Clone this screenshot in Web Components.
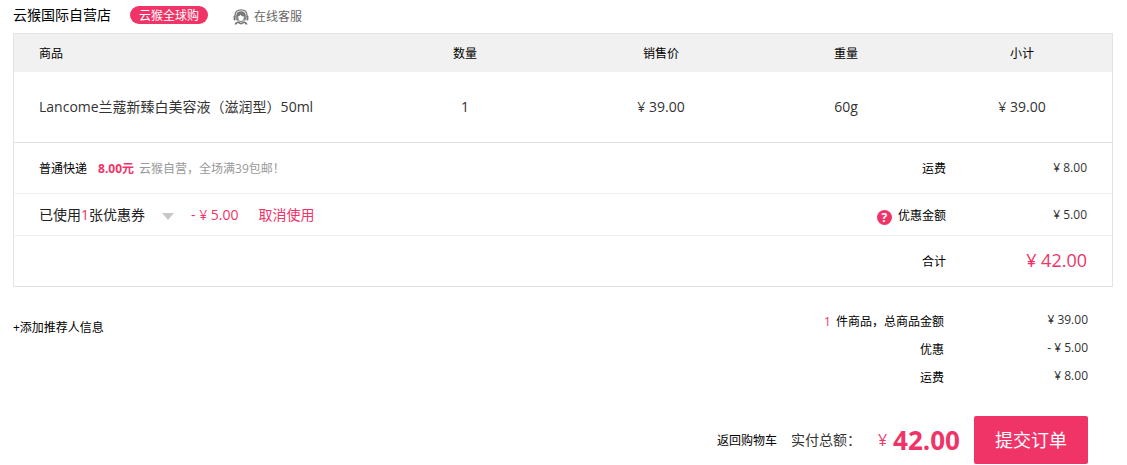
<!DOCTYPE html>
<html lang="zh-CN">
<head>
<meta charset="utf-8">
<title>确认订单</title>
<style>
  body {
    margin: 0;
    padding: 0 14px 0 13px;
    background: #fff;
    color: #000;
    font: 12px/20px "Open Sans", "Noto Sans CJK SC", sans-serif;
    --pink: #f03468;
    --line: #e3e3e3;
    --line-soft: #f1f1f1;
  }
</style>
</head>
<body>
<order-page></order-page>

<script>
const define = (name, html) => {
  const template = document.createElement('template');
  template.innerHTML = html;
  customElements.define(name, class extends HTMLElement {
    constructor() {
      super();
      this.attachShadow({ mode: 'open' }).append(template.content.cloneNode(true));
    }
  });
};

define('service-icon', `
  <style>
    :host { display: block; width: 16px; height: 16px; }
    svg { display: block; }
  </style>
  <svg width="16" height="16" viewBox="0 0 16 16" aria-hidden="true">
    <path d="M2 8V6.500C2 2.800 4.500 .8 8 .8s6 2 6 5.700V8" fill="none" stroke="#777" stroke-width="1.200"/>
    <path d="M3.200 11V6.500C3.200 3.800 5 2.200 8 2.200s4.800 1.600 4.800 4.300V11l-1.600 1V7.500C9.500 7.400 8.300 6.800 7.300 5.700 6.800 6.800 6 7.400 4.800 7.600V12z" fill="#777"/>
    <rect x=".6" y="6.500" width="2" height="5" rx="1" fill="#777"/>
    <rect x="13.400" y="6.500" width="2" height="5" rx="1" fill="#777"/>
    <path d="M4.800 8.500c0 2.600 1.300 4 3.200 4s3.200-1.400 3.200-4" fill="none" stroke="#777"/>
    <path d="M1.500 15.500c.3-2 1.800-2.800 4-3.200L8 14l2.500-1.700c2.200.4 3.700 1.200 4 3.200h-2l-1-1.500L8 15.500 4.500 14l-1 1.500z" fill="#777"/>
  </svg>`);

define('shop-bar', `
  <style>
    :host { display: flex; align-items: center; height: 30px; padding-bottom: 3px; }
    .name { font-size: 14px; }
    .tag { margin-left: 19px; padding: 1px 9px 0; border-radius: 9px; background: var(--pink); color: #fff; line-height: 17px; }
    a { display: flex; align-items: center; gap: 5px; margin-left: 25px; padding-top: 4px; color: #666; text-decoration: none; }
  </style>
  <span class="name"><slot name="name"></slot></span>
  <span class="tag"><slot name="tag"></slot></span>
  <a href="#service"><service-icon></service-icon><slot name="service"></slot></a>`);

define('goods-table', `
  <style>
    :host { display: block; }
    table { width: 100%; border-collapse: collapse; table-layout: fixed; }
    th, td { padding: 0; text-align: center; }
    th { height: 36px; padding-top: 2px; background: #f1f1f1; font-weight: normal; }
    td { height: 70px; color: #333; font-size: 14px; }
    th:first-child, td:first-child { padding-left: 25px; text-align: left; }
    .qty { width: 194px; }
    .price { width: 198px; }
    .weight { width: 172px; }
    .subtotal { width: 180px; }
  </style>
  <table>
    <thead>
      <tr>
        <th scope="col">商品</th>
        <th scope="col" class="qty">数量</th>
        <th scope="col" class="price">销售价</th>
        <th scope="col" class="weight">重量</th>
        <th scope="col" class="subtotal">小计</th>
      </tr>
    </thead>
    <tbody>
      <tr>
        <td>Lancome兰蔻新臻白美容液（滋润型）50ml</td>
        <td>1</td>
        <td>¥ 39.00</td>
        <td>60g</td>
        <td>¥ 39.00</td>
      </tr>
    </tbody>
  </table>`);

define('order-line', `
  <style>
    :host { display: flex; align-items: center; min-height: 50px; padding: 0 25px; border-top: 1px solid var(--line-soft); }
    .detail { display: flex; align-items: center; flex: 1; }
    .label { display: flex; align-items: center; padding-top: 2px; }
    .value { width: 141px; text-align: right; color: #333; }
  </style>
  <div class="detail"><slot></slot></div>
  <div class="label"><slot name="label"></slot></div>
  <div class="value"><slot name="value"></slot></div>`);

define('shipping-method', `
  <style>
    :host { display: block; padding-top: 2px; }
    b { margin-left: 11px; color: var(--pink); }
    .note { margin-left: 5px; color: #999; }
  </style>
  <span>普通快递</span><b>8.00元</b><span class="note">云猴自营，全场满39包邮！</span>`);

define('coupon-picker', `
  <style>
    :host { display: flex; align-items: center; font-size: 14px; color: #222; }
    em, .amount, a { font-style: normal; color: var(--pink); }
    button { margin: 2px 17px 0; padding: 0; border: 0; background: none; line-height: 0; }
    a { margin-left: 20px; text-decoration: none; }
  </style>
  <span>已使用<em>1</em>张优惠券</span>
  <button type="button" aria-label="选择优惠券">
    <svg width="12" height="8" viewBox="0 0 12 8"><path d="M0 1h12L6 8z" fill="#c8c8c8"/></svg>
  </button>
  <span class="amount">- ¥ 5.00</span>
  <a href="#cancel">取消使用</a>`);

define('help-tip', `
  <style>
    :host { display: block; margin-right: 6px; padding-top: 3px; }
    button { display: block; width: 15px; height: 15px; padding: 0; border: 0; border-radius: 50%; background: var(--pink); color: #fff; font: bold 12px/15px "Open Sans", sans-serif; }
  </style>
  <button type="button" aria-label="优惠金额说明">?</button>`);

define('order-box', `
  <style>
    :host { display: block; border: 1px solid var(--line); }
    .first { border-color: var(--line); }
    .coupon { min-height: 41px; }
    .grand { color: var(--pink); font-size: 18px; }
  </style>
  <goods-table></goods-table>
  <order-line class="first">
    <shipping-method></shipping-method>
    <span slot="label">运费</span>
    <span slot="value">¥ 8.00</span>
  </order-line>
  <order-line class="coupon">
    <coupon-picker></coupon-picker>
    <help-tip slot="label"></help-tip>
    <span slot="label">优惠金额</span>
    <span slot="value">¥ 5.00</span>
  </order-line>
  <order-line>
    <span slot="label">合计</span>
    <span slot="value" class="grand">¥ 42.00</span>
  </order-line>`);

define('price-summary', `
  <style>
    :host { display: flex; justify-content: space-between; align-items: flex-start; padding: 19px 25px 0 0; }
    a { padding-top: 12px; color: inherit; text-decoration: none; }
    dl { margin: 0; }
    .row { display: flex; line-height: 28px; }
    dt, dd { margin: 0; text-align: right; }
    dt { flex: 1; padding-top: 4px; line-height: 24px; }
    dd { width: 144px; color: #333; }
    em { margin-right: 5px; font-style: normal; color: var(--pink); }
  </style>
  <a href="#referrer">+添加推荐人信息</a>
  <dl>
    <div class="row"><dt><em>1</em>件商品，总商品金额</dt><dd>¥ 39.00</dd></div>
    <div class="row"><dt>优惠</dt><dd>- ¥ 5.00</dd></div>
    <div class="row"><dt>运费</dt><dd>¥ 8.00</dd></div>
  </dl>`);

define('checkout-bar', `
  <style>
    :host { display: flex; justify-content: flex-end; align-items: center; padding: 26px 25px 0 0; }
    a { padding-top: 2px; color: inherit; text-decoration: none; }
    .label { margin-left: 14px; font-size: 14px; color: #333; }
    .yen { margin-left: 17px; color: var(--pink); font-size: 16px; }
    strong { margin-left: 6px; color: var(--pink); font-size: 26px; }
    button { height: 48px; margin-left: 14px; padding: 0 21px; border: 0; border-radius: 2px; background: var(--pink); color: #fff; font: inherit; font-size: 18px; }
  </style>
  <a href="#cart">返回购物车</a>
  <span class="label">实付总额：</span>
  <span class="yen">¥</span>
  <strong>42.00</strong>
  <button type="submit">提交订单</button>`);

define('order-page', `
  <style>:host { display: block; }</style>
  <shop-bar>
    <span slot="name">云猴国际自营店</span>
    <span slot="tag">云猴全球购</span>
    <span slot="service">在线客服</span>
  </shop-bar>
  <order-box></order-box>
  <price-summary></price-summary>
  <checkout-bar></checkout-bar>`);
</script>
</body>
</html>
